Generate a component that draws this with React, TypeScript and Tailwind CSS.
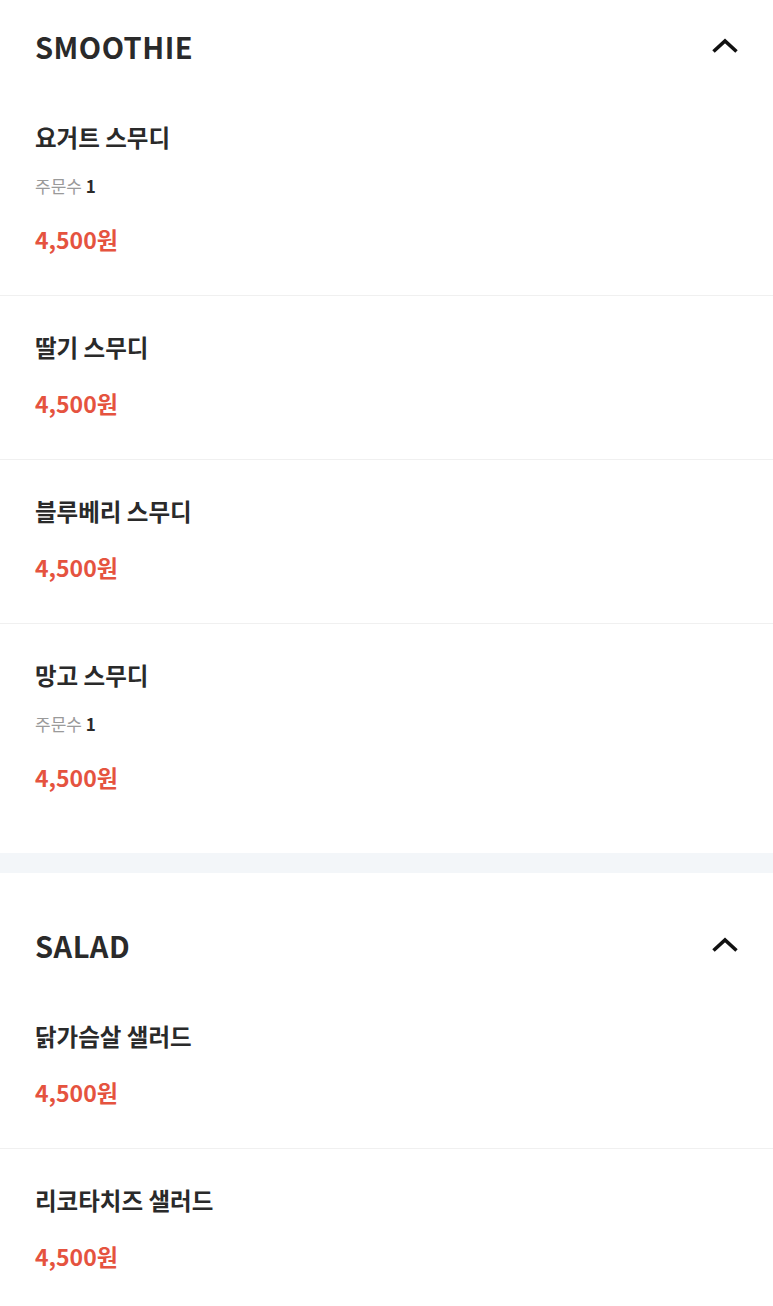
import React from "react";

type Item = { name: string; orders?: number; price: string };
type Section = { title: string; items: Item[] };

const sections: Section[] = [
  {
    title: "SMOOTHIE",
    items: [
      { name: "요거트 스무디", orders: 1, price: "4,500원" },
      { name: "딸기 스무디", price: "4,500원" },
      { name: "블루베리 스무디", price: "4,500원" },
      { name: "망고 스무디", orders: 1, price: "4,500원" },
    ],
  },
  {
    title: "SALAD",
    items: [
      { name: "닭가슴살 샐러드", price: "4,500원" },
      { name: "리코타치즈 샐러드", price: "4,500원" },
    ],
  },
];

function Chevron() {
  return (
    <svg width="28" height="16" viewBox="0 0 28 16" fill="none">
      <path d="M2.5 13.5 L14 3 L25.5 13.5" stroke="#111" strokeWidth="3.6" strokeLinecap="butt" strokeLinejoin="miter" />
    </svg>
  );
}

function MenuItem({ item, last }: { item: Item; last: boolean }) {
  const hasOrders = item.orders !== undefined;
  return (
    <div className={`px-[35px] pt-[34px] ${last ? "pb-[60px]" : "pb-[40px] border-b border-[#f0f0f0]"}`}>
      <div className="text-[23.5px] leading-[34px] font-bold text-[#2a2a2a]">{item.name}</div>
      {hasOrders && (
        <div className="mt-[17px] text-[17px] leading-[30px] text-[#9a9a9a]">
          주문수 <span className="font-bold text-[#2a2a2a]">{item.orders}</span>
        </div>
      )}
      <div className={`${hasOrders ? "mt-[22px]" : "mt-[23px]"} text-[23px] leading-[32px] font-bold text-[#e5533f]`}>
        {item.price}
      </div>
    </div>
  );
}

export default function App() {
  return (
    <div
      className="w-[773px] bg-white"
      style={{ fontFamily: '"Noto Sans CJK KR", "Noto Sans", sans-serif' }}
    >
      {sections.map((s, i) => (
        <div key={s.title}>
          {i > 0 && <div className="h-[20px] bg-[#f3f6f9]" />}
          <div className={`flex items-center justify-between pl-[35px] pr-[34px] ${i > 0 ? "pt-[54px]" : "pt-[28px]"} pb-[22px]`}>
            <span className="text-[29px] leading-[36px] tracking-[0.5px] font-semibold text-[#2a2a2a]">{s.title}</span>
            <Chevron />
          </div>
          {s.items.map((it, j) => (
            <MenuItem key={it.name} item={it} last={j === s.items.length - 1} />
          ))}
        </div>
      ))}
    </div>
  );
}
